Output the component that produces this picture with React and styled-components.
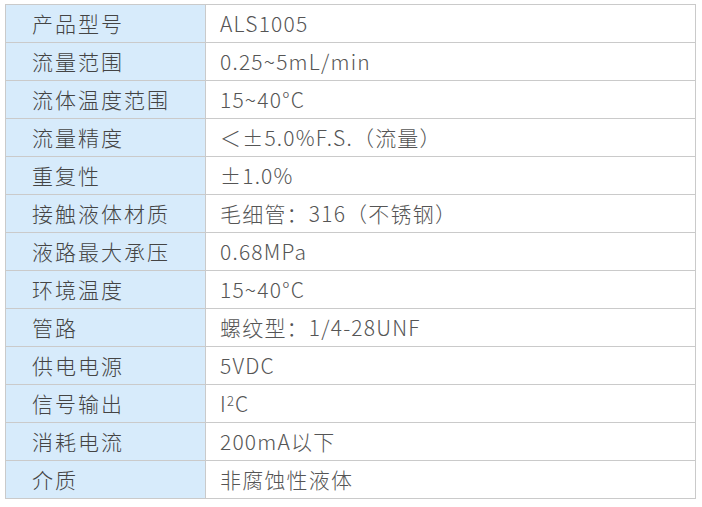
import React from 'react';
import styled, { createGlobalStyle } from 'styled-components';

const Global = createGlobalStyle`
  body {
    margin: 0;
    background: #fff;
    font-family: "Noto Sans CJK SC", "Noto Sans", sans-serif;
  }
`;

const Page = styled.div`
  padding: 4px 0 0 5px;
`;

const Table = styled.div`
  display: grid;
  grid-template-columns: 200px 490px;
  width: 690px;
  border-top: 1px solid #cacaca;
  border-left: 1px solid #cacaca;
`;

const Cell = styled.div`
  box-sizing: border-box;
  height: 38px;
  display: flex;
  align-items: center;
  border-right: 1px solid #cacaca;
  border-bottom: 1px solid #cacaca;
  font-size: 21px;
  font-weight: 300;
  letter-spacing: ${p => (p.$label ? '2px' : '1.2px')};
  padding: 0 0 2px ${p => (p.$label ? '26px' : '14px')};
  background: ${p => (p.$label ? '#d7ebfb' : '#fff')};
  color: ${p => (p.$label ? '#444' : '#555')};
  white-space: nowrap;
`;

const Sup = styled.span`
  font-size: 13px;
  letter-spacing: 0;
  margin: 0 1px 0 0;
  align-self: flex-start;
  position: relative;
  top: 6px;
`;

const rows = [
  ['产品型号', 'ALS1005'],
  ['流量范围', '0.25~5mL/min'],
  ['流体温度范围', '15~40°C'],
  ['流量精度', '＜±5.0%F.S.（流量）'],
  ['重复性', '±1.0%'],
  ['接触液体材质', '毛细管：316（不锈钢）'],
  ['液路最大承压', '0.68MPa'],
  ['环境温度', '15~40°C'],
  ['管路', '螺纹型：1/4-28UNF'],
  ['供电电源', '5VDC'],
  ['信号输出', <>I<Sup>2</Sup>C</>],
  ['消耗电流', '200mA以下'],
  ['介质', '非腐蚀性液体'],
];

export default function App() {
  return (
    <Page>
      <Global />
      <Table>
        {rows.map(([k, v], i) => (
          <React.Fragment key={i}>
            <Cell $label>{k}</Cell>
            <Cell>{v}</Cell>
          </React.Fragment>
        ))}
      </Table>
    </Page>
  );
}
